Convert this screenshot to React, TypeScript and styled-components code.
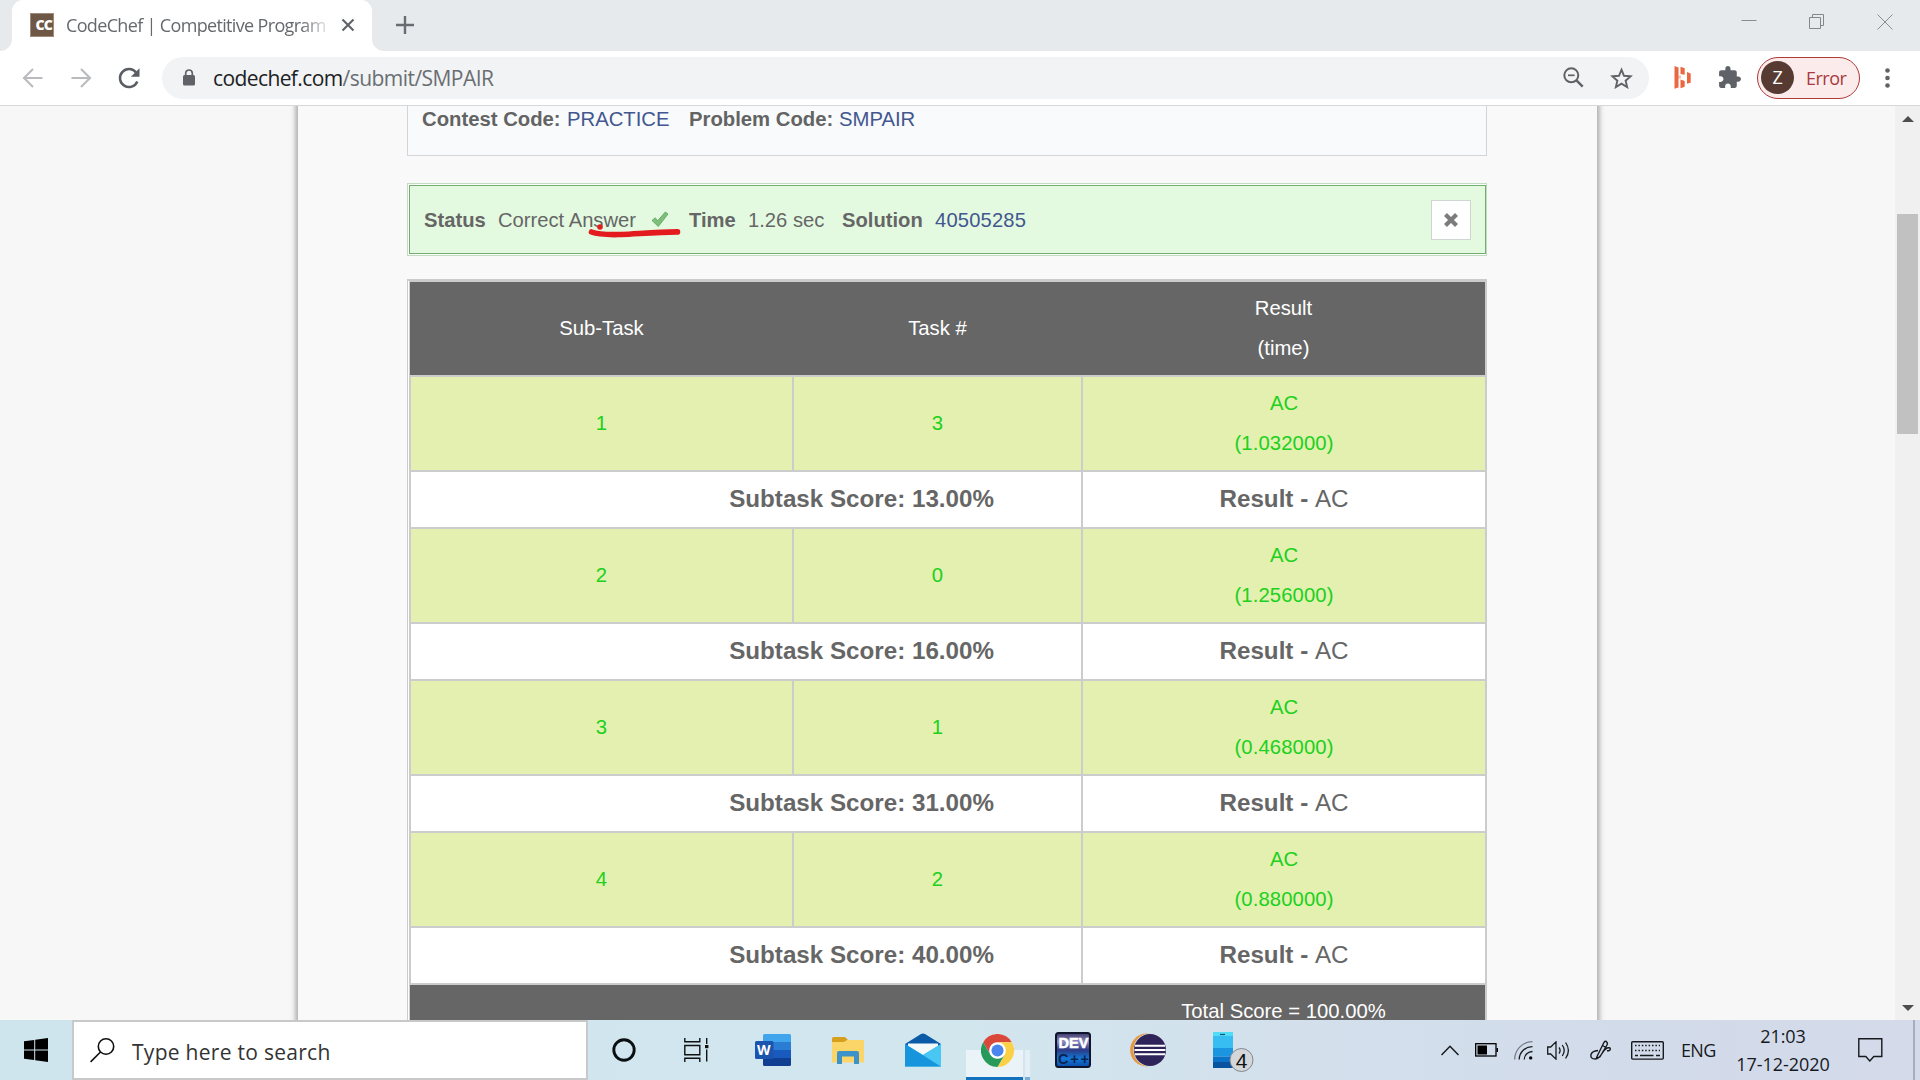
import React from 'react';
import styled, { createGlobalStyle } from 'styled-components';

const Global = createGlobalStyle`
  * { box-sizing: border-box; }
  html, body { margin: 0; padding: 0; overflow: hidden; }
  svg { display: block; flex: none; }
`;

const ui = `"Open Sans", "Noto Sans", sans-serif`;
const arial = `"Liberation Sans", Arial, sans-serif`;

const Screen = styled.div`
  width: 1920px;
  height: 1080px;
  display: flex;
  flex-direction: column;
  overflow: hidden;
  background: #fff;
`;

/* ---------- browser chrome ---------- */

const TabStrip = styled.div`
  height: 51px;
  flex: none;
  display: flex;
`;
const StripEdge = styled.div`
  width: 12px;
  background: #e6eaed;
  border-bottom-right-radius: 12px;
`;
const TabBack = styled.div`
  width: 360px;
  background: linear-gradient(#e6eaed 0 20px, #fff 20px);
`;
const Tab = styled.div`
  height: 51px;
  background: #fff;
  border-radius: 11px 11px 0 0;
  display: flex;
  align-items: center;
  padding: 0 17px 1px 18px;
`;
const Favicon = styled.div`
  width: 24px;
  height: 24px;
  background: #6f5745;
  border: 1px solid #a08c7c;
  color: #fff;
  font: 800 14px/21px ${ui};
  letter-spacing: -0.8px;
  text-align: right;
  padding-right: 1px;
  overflow: hidden;
`;
const TabTitle = styled.div`
  width: 264px;
  margin: -1px 0 0 12px;
  overflow: hidden;
  white-space: nowrap;
  font: 400 18px/26px ${ui};
  letter-spacing: -0.66px;
  color: #65696e;
  mask-image: linear-gradient(90deg, #000 235px, transparent 266px);
`;
const TabClose = styled.div`
  margin-left: auto;
`;
const StripRest = styled.div`
  flex: 1;
  background: #e6eaed;
  border-bottom-left-radius: 12px;
  display: flex;
  justify-content: space-between;
  padding: 16px 27px 0 24px;
`;
const WindowControls = styled.div`
  display: flex;
  gap: 52px;
  margin-top: -2px;
`;

const Toolbar = styled.div`
  height: 55px;
  flex: none;
  display: flex;
  align-items: center;
  padding: 0 24px 1px 20px;
  border-bottom: 1px solid #d6d8da;
`;
const NavIcons = styled.div`
  display: flex;
  gap: 24.5px;
  width: 142px;
`;
const Omnibox = styled.div`
  width: 1487px;
  height: 42px;
  border-radius: 21px;
  background: #f1f3f4;
  display: flex;
  align-items: center;
  padding: 0 16px 0 21px;
`;
const Url = styled.div`
  flex: 1;
  margin-left: 18px;
  font: 400 21px/30px ${ui};
  letter-spacing: -0.55px;
  color: #6a6e73;
  b { font-weight: 400; color: #202124; letter-spacing: -0.6px; }
`;
const Actions = styled.div`
  display: flex;
  align-items: center;
  gap: 26px;
`;
const ProfileChip = styled.div`
  width: 103px;
  height: 42px;
  margin: 0 25px 0 15px;
  border: 1.5px solid #b03a3a;
  border-radius: 21px;
  background: #fbebea;
  display: flex;
  align-items: center;
  padding-left: 3px;
  font: 400 18px/24px ${ui};
  letter-spacing: -0.5px;
  color: #a93a40;
`;
const Avatar = styled.div`
  width: 33px;
  height: 33px;
  margin-right: 12px;
  border-radius: 50%;
  background: #573b33;
  color: #fff;
  font: 400 18px/33px ${ui};
  text-align: center;
`;

/* ---------- page ---------- */

const Viewport = styled.div`
  height: 914px;
  flex: none;
  display: flex;
  overflow: hidden;
  background: #f8f8f8;
`;
const Gutter = styled.div<{ $side: 'left' | 'right' }>`
  width: 298px;
  background: linear-gradient(
    to ${p => (p.$side === 'left' ? 'left' : 'right')},
    #b8b8b8 0, #c9c9c9 2px, #e2e2e2 4px, #f2f2f2 6px, #f7f7f7 9px
  );
`;
const Page = styled.div`
  width: 1299px;
  background: #f9f9f9;
  padding-left: 109px;
`;
const CodeBox = styled.div`
  width: 1080px;
  height: 50px;
  background: #f8fafc;
  border: 1px solid #d2d4d6;
  border-top: 0;
  display: grid;
  grid-template-columns: 145px 122px 150px 1fr;
  padding: 0 0 0 14px;
  font: 400 20.3px/26px ${arial};
  color: #636363;
  white-space: nowrap;
`;
const Link = styled.span`
  color: #43568f;
`;
const Digits = styled(Link)`
  letter-spacing: 0.16px;
`;
const StatusFrame = styled.div`
  width: 1080px;
  height: 73px;
  margin-top: 27px;
  border: 1px solid #c3dcc1;
  padding: 1px 0 1px 1px;
  background: #fbfffb;
`;
const StatusBox = styled.div`
  height: 69px;
  border: 1px solid #74ad71;
  background: #e3fae1;
  display: grid;
  grid-template-columns: 74px 153px 38px 59px 94px 93px 1fr 40px;
  align-items: center;
  padding: 0 14px 0 14px;
  font: 400 20.2px/30px ${arial};
  color: #666;
  white-space: nowrap;
  position: relative;
`;
const CloseBox = styled.div`
  width: 40px;
  height: 40px;
  border: 1px solid #cfd5cf;
  background: #fff;
  display: flex;
  align-items: center;
  justify-content: center;
`;
const Annotation = styled.svg`
  position: absolute;
  left: 175px;
  top: 37px;
`;
const TableFrame = styled.div`
  width: 1080px;
  margin-top: 23px;
  border: 1px solid #ccc;
  border-top-width: 2px;
  padding-left: 1px;
  background: #fff;
`;
const Table = styled.div`
  border: solid #ccc;
  border-width: 1px 1px 0 1px;
  font: 400 20.3px/40px ${arial};
`;
const Row = styled.div<{ $kind: 'head' | 'task' | 'score' | 'total' }>`
  display: grid;
  height: ${p => ({ head: 95, task: 95, score: 57, total: 52 })[p.$kind]}px;
  grid-template-columns: ${p =>
    p.$kind === 'score' || p.$kind === 'total' ? '672px 1fr' : '383px 289px 1fr'};
  color: ${p => ({ head: '#fff', task: '#20d020', score: '#666', total: '#fff' })[p.$kind]};
  background: ${p => ({ head: '#666', task: '#e3f0af', score: '#fff', total: '#666' })[p.$kind]};
  border: 0 solid #ccc;
  border-bottom-width: ${p => (p.$kind === 'total' ? 0 : 2)}px;
  border-left-width: ${p => (p.$kind === 'task' || p.$kind === 'score' ? 1 : 0)}px;
`;
const Cell = styled.div<{ $rule?: boolean; $end?: boolean }>`
  display: flex;
  flex-direction: column;
  justify-content: center;
  text-align: center;
  padding-bottom: 1px;
  ${p => p.$end && 'text-align: right; padding-right: 87px;'}
  border-right: ${p => (p.$rule ? '2px solid #ccc' : 0)};
`;
const Time = styled.span`
  letter-spacing: 0.1px;
`;
const Score = styled.div`
  font-size: 24.2px;
  line-height: 40px;
`;

const Scrollbar = styled.div`
  width: 25px;
  background: #f0f0f0;
  display: flex;
  flex-direction: column;
  align-items: center;
  padding: 10px 0 9px;
`;
const Thumb = styled.div`
  width: 21px;
  height: 220px;
  margin: 92px 0 auto;
  background: #c1c1c1;
`;

/* ---------- taskbar ---------- */

const Taskbar = styled.div`
  height: 60px;
  flex: none;
  display: flex;
  background: linear-gradient(90deg, #cee5ee 0%, #d2e6ee 50%, #d3e0ec 68%, #d2dbea 85%, #d4daea 100%);
`;
const Start = styled.div`
  width: 72px;
  display: flex;
  align-items: center;
  padding-left: 24px;
`;
const Search = styled.div`
  width: 516px;
  background: #fff;
  border: 2px solid #c7c9ca;
  display: flex;
  align-items: center;
  padding-left: 16px;
  font: 400 21px/30px ${ui};
  letter-spacing: 0.28px;
  color: #333;
`;
const SearchLabel = styled.span`
  margin-left: 17px;
  padding-top: 3px;
`;
const TaskButton = styled.div<{ $w?: number }>`
  width: ${p => p.$w ?? 75}px;
  display: flex;
  align-items: center;
  justify-content: center;
`;
const Pinned = styled.div`
  display: flex;
  padding-left: 3px;
`;
const Active = styled.div`
  width: 75px;
  display: flex;
  padding: 0 5px 0 6px;
`;
const ActiveBody = styled.div`
  width: 58px;
  margin-right: 2px;
  border-bottom: 3px solid #1272bd;
  background: linear-gradient(transparent 30px, #eaf4f8 30px);
  display: flex;
  justify-content: center;
  align-items: center;
  padding: 3px 0 0 5px;
`;
const ActiveStack = styled.div`
  width: 5px;
  border-bottom: 3px solid #76aed8;
  background: linear-gradient(transparent 30px, #e4eef5 30px);
`;
const Tray = styled.div`
  margin-left: auto;
  width: 487px;
  display: grid;
  grid-template-columns: 34px 40px 33px 43px 40px 44px 69px 94px 1fr 7px;
  align-items: center;
  font: 400 18px/24px ${ui};
  color: #16191d;
`;
const Lang = styled.div`
  padding-left: 14px;
  letter-spacing: -0.7px;
`;
const Clock = styled.div`
  text-align: center;
  line-height: 28px;
  letter-spacing: -0.05px;
  white-space: nowrap;
`;
const ShowDesktop = styled.div`
  height: 60px;
  border-left: 2px solid #a7aec0;
`;
const IconSlot = styled.div<{ $l?: number }>`
  padding-left: ${p => p.$l ?? 0}px;
`;
const BadgeText = styled.text`
  font: 400 21px ${arial};
`;
const WordLetter = styled.text`
  font: 700 14px ${ui};
`;
const DevLetters = styled.text`
  font: 700 14.5px ${arial};
`;

const scores = [
  { id: 1, task: 3, time: '1.032000', score: '13.00' },
  { id: 2, task: 0, time: '1.256000', score: '16.00' },
  { id: 3, task: 1, time: '0.468000', score: '31.00' },
  { id: 4, task: 2, time: '0.880000', score: '40.00' },
];

const Browser = () => (
  <>
    <TabStrip>
      <StripEdge />
      <TabBack>
        <Tab>
          <Favicon>CC</Favicon>
          <TabTitle>CodeChef | Competitive Program</TabTitle>
          <TabClose>
            <svg width="14" height="14" viewBox="0 0 14 14" stroke="#5f6368" strokeWidth="2.1">
              <path d="M1.5 1.5l11 11M12.5 1.5l-11 11" />
            </svg>
          </TabClose>
        </Tab>
      </TabBack>
      <StripRest>
        <svg width="18" height="18" viewBox="0 0 18 18" stroke="#686c70" strokeWidth="2.4">
          <path d="M9 0v18M0 9h18" />
        </svg>
        <WindowControls>
          <svg width="16" height="16" viewBox="0 0 16 16" stroke="#8a8d90">
            <path d="M.5 6.5h15" />
          </svg>
          <svg width="16" height="16" viewBox="0 0 16 16" stroke="#85888b" fill="none">
            <path d="M.5 3.5h11v11H.5zM3.5 3.5v-3h11v11h-3" />
          </svg>
          <svg width="16" height="16" viewBox="0 0 16 16" stroke="#8a8d90">
            <path d="M.5 .5l15 15M15.5 .5l-15 15" />
          </svg>
        </WindowControls>
      </StripRest>
    </TabStrip>
    <Toolbar>
      <NavIcons>
        <svg width="24" height="24" viewBox="0 0 24 24" fill="none" stroke="#b9bbbe" strokeWidth="2.1">
          <path d="M22.5 12H4.5M13 3l-9 9 9 9" />
        </svg>
        <svg width="24" height="24" viewBox="0 0 24 24" fill="none" stroke="#b9bbbe" strokeWidth="2.1">
          <path d="M2.5 12h18M12 3l9 9-9 9" />
        </svg>
        <svg width="24" height="24" viewBox="0 0 24 24" fill="none" stroke="#5a5e62" strokeWidth="2.5">
          <path d="M20.3 15.5A9 9 0 1 1 19 6.4" />
          <path d="M22.5 2.2v8.6h-8.6z" fill="#5a5e62" stroke="none" />
        </svg>
      </NavIcons>
      <Omnibox>
        <svg width="12" height="17" viewBox="0 0 12 17">
          <path d="M2.7 7V4.3a3.3 3.3 0 0 1 6.6 0V7" fill="none" stroke="#5f6368" strokeWidth="1.7" />
          <rect x="0" y="6" width="12" height="10.5" rx="1.5" fill="#5f6368" />
        </svg>
        <Url><b>codechef.com</b>/submit/SMPAIR</Url>
        <Actions>
          <svg width="21" height="21" viewBox="0 0 21 21" fill="none" stroke="#5f6368">
            <circle cx="8.3" cy="8.3" r="7" strokeWidth="2" />
            <path d="M5 8.3h6.6" strokeWidth="1.7" />
            <path d="M13.2 13.2l6.5 6.5" strokeWidth="2.5" />
          </svg>
          <svg width="23" height="22" viewBox="0 0 24 23" fill="none" stroke="#5f6368" strokeWidth="2">
            <path d="M12 2.8l2.6 6.4 6.9.6-5.2 4.5 1.6 6.7L12 17.4 6.1 21l1.6-6.7-5.2-4.5 6.9-.6z" />
          </svg>
        </Actions>
      </Omnibox>
      <IconSlot $l={25}>
        <svg width="18" height="23" viewBox="0 0 18 23" fill="#e9683f">
          <path d="M.5 0l4 1.5v20l-4 1.3zM6.5 .8L10.7 2.3v6.5L6.5 8zM6.500 13.500l4.200 1.500v5.700L6.500 22.300zM13 6l3.700 1.500v9.200L13 17.800z" />
          <path d="M4 9.500h3v3H4z" opacity=".4" />
        </svg>
      </IconSlot>
      <IconSlot $l={25}>
        <svg width="25" height="25" viewBox="0 0 24 24" fill="#5f6368">
          <path d="M20.500 11H19V7c0-1.100-.9-2-2-2h-4V3.500C13 2.120 11.880 1 10.500 1S8 2.120 8 3.500V5H4c-1.100 0-1.990.9-1.990 2v3.800H3.500c1.490 0 2.700 1.210 2.700 2.700s-1.210 2.700-2.700 2.700H2V20c0 1.100.9 2 2 2h3.800v-1.500c0-1.490 1.210-2.700 2.700-2.700 1.490 0 2.700 1.210 2.700 2.700V22H17c1.100 0 2-.9 2-2v-4h1.500c1.380 0 2.500-1.120 2.500-2.500S21.880 11 20.500 11z" />
        </svg>
      </IconSlot>
      <ProfileChip>
        <Avatar>Z</Avatar>
        Error
      </ProfileChip>
      <svg width="5" height="20" viewBox="0 0 5 20" fill="#5f6368">
        <circle cx="2.5" cy="2.5" r="2.3" />
        <circle cx="2.5" cy="10" r="2.3" />
        <circle cx="2.5" cy="17.5" r="2.3" />
      </svg>
    </Toolbar>
  </>
);

const Content = () => (
  <Viewport>
    <Gutter $side="left" />
    <Page>
      <CodeBox>
        <b>Contest Code:</b>
        <Link>PRACTICE</Link>
        <b>Problem Code:</b>
        <Link>SMPAIR</Link>
      </CodeBox>
      <StatusFrame>
        <StatusBox>
          <b>Status</b>
          <span>Correct Answer</span>
          <svg width="18" height="17" viewBox="0 0 18 17">
            <path d="M1 9.5l3.2-2.7 2.4 3L14.3 1 17 3 7.3 15.5z" fill="#7cc07a" stroke="#5aa05c" strokeWidth=".8" />
          </svg>
          <b>Time</b>
          <span>1.26 sec</span>
          <b>Solution</b>
          <Digits>40505285</Digits>
          <CloseBox>
            <svg width="14" height="14" viewBox="0 0 14 14" stroke="#7c7c7c" strokeWidth="4.2">
              <path d="M1.5 1.5l11 11M12.5 1.5l-11 11" />
            </svg>
          </CloseBox>
          <Annotation width="100" height="24" viewBox="0 0 100 24" fill="none" stroke="#e31b1f" strokeLinecap="round">
            <path d="M6.500 9c8 3.200 18 2.700 30 2.500C51 11 71 9 92.500 8.900" strokeWidth="5.600" />
            <circle cx="15" cy="4" r="2.800" fill="#e31b1f" stroke="none" />
          </Annotation>
        </StatusBox>
      </StatusFrame>
      <TableFrame>
        <Table>
          <Row $kind="head">
            <Cell>Sub-Task</Cell>
            <Cell>Task #</Cell>
            <Cell><span>Result</span><span>(time)</span></Cell>
          </Row>
          {scores.map(s => (
            <React.Fragment key={s.id}>
              <Row $kind="task">
                <Cell $rule>{s.id}</Cell>
                <Cell $rule>{s.task}</Cell>
                <Cell><span>AC</span><Time>({s.time})</Time></Cell>
              </Row>
              <Row $kind="score">
                <Cell $rule $end><Score><b>Subtask Score: {s.score}%</b></Score></Cell>
                <Cell><Score><b>Result - </b>AC</Score></Cell>
              </Row>
            </React.Fragment>
          ))}
          <Row $kind="total">
            <Cell />
            <Cell>Total Score = 100.00%</Cell>
          </Row>
        </Table>
      </TableFrame>
    </Page>
    <Gutter $side="right" />
    <Scrollbar>
      <svg width="12" height="6" viewBox="0 0 12 6" fill="#4d4d4d"><path d="M0 6L6 0l6 6z" /></svg>
      <Thumb />
      <svg width="12" height="6" viewBox="0 0 12 6" fill="#4d4d4d"><path d="M0 0l6 6 6-6z" /></svg>
    </Scrollbar>
  </Viewport>
);

const Dock = () => (
  <Taskbar>
    <Start>
      <svg width="24" height="24" viewBox="0 0 24 24" fill="#000">
        <path d="M0 3.3L10.2 1.9v9.6H0zM11.2 1.8L24 0v11.5H11.2zM0 12.5h10.2v9.6L0 20.7zM11.2 12.5H24V24l-12.8-1.8z" />
      </svg>
    </Start>
    <Search>
      <svg width="25" height="25" viewBox="0 0 25 25" fill="none" stroke="#111" strokeWidth="1.6">
        <circle cx="16" cy="8.5" r="7.7" />
        <path d="M10.5 14L.6 23.9" />
      </svg>
      <SearchLabel>Type here to search</SearchLabel>
    </Search>
    <TaskButton $w={72}>
      <svg width="26" height="26" viewBox="0 0 26 26" fill="none" stroke="#0a0f12" strokeWidth="2.9">
        <circle cx="13" cy="13" r="10.2" />
      </svg>
    </TaskButton>
    <TaskButton $w={72}>
      <svg width="25" height="24" viewBox="0 0 25 24" fill="none" stroke="#111" strokeWidth="1.4">
        <path d="M.8 0v3.8h15V0M.8 24v-3.8h15V24M.8 7.5h15v9.2H.8zM22.7 0v6M22.7 11.5V23.5" />
        <path d="M21 7h3.4v3.2H21z" fill="#111" stroke="none" />
      </svg>
    </TaskButton>
    <Pinned>
      <TaskButton>
        <svg width="36" height="32" viewBox="0 0 36 32">
          <path d="M8 1.5Q8 0 9.5 0h25Q36 0 36 1.5V8H8z" fill="#41a5ee" />
          <path d="M8 8h28v8H8z" fill="#2b7cd3" />
          <path d="M8 16h28v8H8z" fill="#185abd" />
          <path d="M8 24h28v6.5q0 1.500-1.500 1.500h-25Q8 32 8 30.500z" fill="#103f91" />
          <rect x="0" y="7" width="18.5" height="18" rx="1.5" fill="#1b54ae" />
          <WordLetter x="2" y="21" fill="#fff">W</WordLetter>
        </svg>
      </TaskButton>
      <TaskButton>
        <svg width="32" height="27" viewBox="0 0 32 27">
          <path d="M0 1.5Q0 0 1.5 0H13l3 3-3 3H0z" fill="#d79f1e" />
          <path d="M0 5h12l3-2h17v22.5H0z" fill="#fbd568" />
          <path d="M5 27V16q0-2 2-2h18q2 0 2 2v11h-5v-7.5H10V27z" fill="#3d93c9" />
        </svg>
      </TaskButton>
      <TaskButton>
        <svg width="36" height="34" viewBox="0 0 36 34">
          <path d="M0 11L16 1q2-1.2 4 0l16 10v8H0z" fill="#0b5aa8" />
          <path d="M3 10.5h30V22H3z" fill="#f3f8fb" />
          <path d="M0 11l18 11L36 11v22.5H0z" fill="#32b8ef" />
          <path d="M0 11l36 22.5H0z" fill="#1795dc" />
          <path d="M18 22L36 11v22.5z" fill="#48c6f4" />
        </svg>
      </TaskButton>
      <Active>
        <ActiveBody>
          <svg width="33" height="33" viewBox="0 0 48 48">
            <circle cx="24" cy="24" r="24" fill="#fff" />
            <path d="M3.2 12A24 24 0 0 1 44.8 12L24 12A12 12 0 0 0 13.6 30z" fill="#d9483b" />
            <path d="M44.8 12A24 24 0 0 1 24 48L34.4 30A12 12 0 0 0 24 12z" fill="#fbcf46" />
            <path d="M24 48A24 24 0 0 1 3.2 12L13.6 30A12 12 0 0 0 34.4 30z" fill="#27995a" />
            <circle cx="24" cy="24" r="11" fill="#fff" />
            <circle cx="24" cy="24" r="8.8" fill="#4a86ee" />
          </svg>
        </ActiveBody>
        <ActiveStack />
      </Active>
      <TaskButton>
        <svg width="36" height="36" viewBox="0 0 36 36">
          <defs>
            <linearGradient id="dev" x1="0" y1="0" x2="0" y2="1">
              <stop offset="0" stopColor="#3b3767" />
              <stop offset=".25" stopColor="#8d8cc0" />
              <stop offset=".5" stopColor="#2b3a85" />
              <stop offset=".75" stopColor="#1277d8" />
              <stop offset="1" stopColor="#0b4ba8" />
            </linearGradient>
          </defs>
          <rect x="1" y="1" width="34" height="34" rx="2.5" fill="url(#dev)" stroke="#10152e" strokeWidth="2" />
          <DevLetters x="3.5" y="16" fill="#fff" stroke="#fff" strokeWidth=".5">DEV</DevLetters>
          <DevLetters x="3" y="32.300" fill="#0a2350" textLength="31">C++</DevLetters>
        </svg>
      </TaskButton>
      <TaskButton>
        <svg width="36" height="34" viewBox="0 0 36 34">
          <circle cx="16.5" cy="17" r="16.4" fill="#e69a43" />
          <circle cx="20" cy="17" r="16.6" fill="#d4e1ec" />
          <circle cx="20" cy="17" r="16" fill="#2f2459" />
          <path d="M5 12.8h30M4.5 17h31M5 21.2h30" stroke="#fff" strokeWidth="2" />
        </svg>
      </TaskButton>
      <TaskButton>
        <svg width="62" height="44" viewBox="0 0 62 44">
          <path d="M21 4h20v16H21z" fill="#37bdf1" />
          <path d="M21 4h20v4H21z" fill="#50dcf7" />
          <path d="M21 20h20v8.5H21z" fill="#1b95e0" />
          <path d="M21 28.5h20V34H21z" fill="#0a72c8" />
          <path d="M21 34h20v6H21z" fill="#07539f" />
          <path d="M28 6.5h5" stroke="#11506e" strokeWidth="1.2" />
          <circle cx="49.5" cy="32" r="11.5" fill="#d3d7da" stroke="#82888d" />
          <BadgeText x="49.5" y="39.5" textAnchor="middle" fill="#111">4</BadgeText>
        </svg>
      </TaskButton>
    </Pinned>
    <Tray>
      <IconSlot $l={8}>
        <svg width="18" height="11" viewBox="0 0 18 11" fill="none" stroke="#16191d" strokeWidth="1.5"><path d="M.5 10L9 1.3l8.5 8.7" /></svg>
      </IconSlot>
      <IconSlot $l={8}>
        <svg width="23" height="14" viewBox="0 0 23 14" fill="none" stroke="#000" strokeWidth="1.3">
          <rect x=".7" y=".7" width="20.3" height="12.3" />
          <path d="M2.5 2.5h9.5v9H2.5zM21.5 5h1.5v4h-1.5z" fill="#000" stroke="none" />
        </svg>
      </IconSlot>
      <IconSlot $l={7}>
        <svg width="19" height="19" viewBox="0 0 19 19" fill="none" stroke="#16191d" strokeWidth="1.3">
          <path d="M.7 18.5A17.8 17.8 0 0 1 18.5.7" opacity=".5" />
          <path d="M5.2 18.5A13 13 0 0 1 18.5 5.7M10.2 18.5a8.3 8.3 0 0 1 8.3-8" />
          <circle cx="16.7" cy="16.9" r="1.7" fill="#000" stroke="none" />
        </svg>
      </IconSlot>
      <IconSlot $l={7}>
        <svg width="23" height="19" viewBox="0 0 23 19" fill="none" stroke="#16191d" strokeWidth="1.3">
          <path d="M.7 6h3L9 .9v17.2L3.7 13h-3zM12 6.5q2.2 3 0 6M15.3 4q3.8 5.5 0 11M18.6 1.5q5.6 8 0 16" />
        </svg>
      </IconSlot>
      <IconSlot $l={7}>
        <svg width="22" height="20" viewBox="0 0 22 20" fill="none" stroke="#16191d" strokeWidth="1.4">
          <path d="M7.5 15.5L14 2.3q1.5-2 3 0 .8 1.4 0 2.7L9.8 17l-3.5 1.5zM8 10.5q-6 .5-7 4-.8 4.5 4.3 4.5 3.7-.2 6.7-5.5 2-4 5-5.5 3-.8 3.300.8.2 2-3.300 2M12.500 5.500L16 7.500" />
        </svg>
      </IconSlot>
      <IconSlot $l={8}>
        <svg width="33" height="19" viewBox="0 0 33 19" fill="none" stroke="#16191d">
          <rect x=".7" y=".7" width="31.6" height="17.4" rx="1" strokeWidth="1.4" />
          <path d="M4 4.5h25M4 9.5h25" strokeWidth="1.4" strokeDasharray="1.5 1.9" />
          <path d="M4 14.5h3M9 14.5h13.5M25 14.5h4" strokeWidth="1.4" />
        </svg>
      </IconSlot>
      <Lang>ENG</Lang>
      <Clock>21:03<br />17-12-2020</Clock>
      <IconSlot $l={28}>
        <svg width="25" height="24" viewBox="0 0 25 24" fill="none" stroke="#16191d" strokeWidth="1.4">
          <path d="M.8.8h23v17.700h-8l-4 4.500-4-4.500h-7z" />
        </svg>
      </IconSlot>
      <ShowDesktop />
    </Tray>
  </Taskbar>
);

export default function App() {
  return (
    <Screen>
      <Global />
      <Browser />
      <Content />
      <Dock />
    </Screen>
  );
}
